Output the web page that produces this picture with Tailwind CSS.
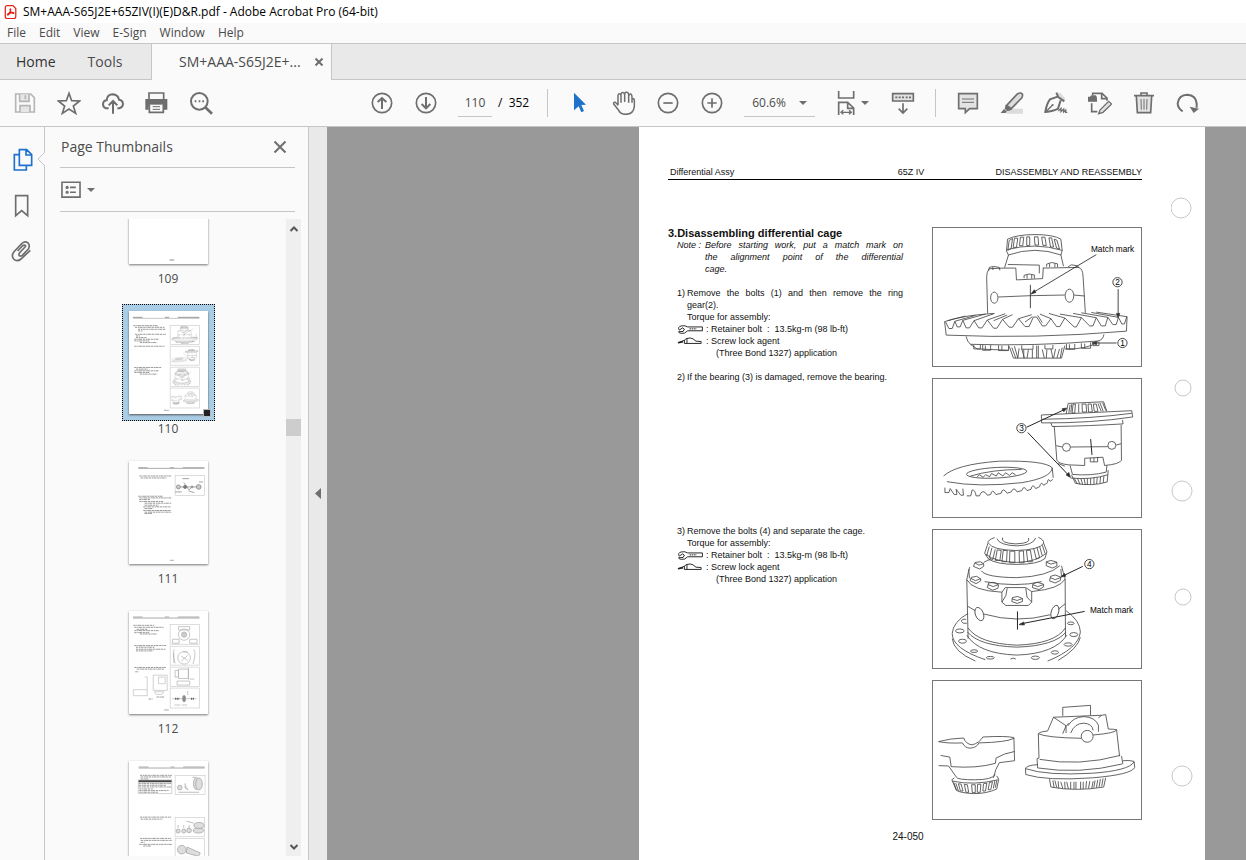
<!DOCTYPE html>
<html lang="en">
<head>
<meta charset="utf-8">
<title>SM+AAA-S65J2E+65ZIV(I)(E)D&amp;R.pdf - Adobe Acrobat Pro (64-bit)</title>
<script src="https://cdn.jsdelivr.net/npm/@tailwindcss/browser@4"></script>
</head>
<body class="flex h-screen flex-col overflow-hidden bg-white font-['Open_Sans','Noto_Sans',sans-serif] text-xs text-[#4b4b4b]">

<!-- Shared drawings -->
<svg class="hidden" aria-hidden="true">
  <symbol id="fig1" viewBox="22 202 628 420" preserveAspectRatio="none">
    <g fill="none" stroke="#444">
      <path d="M247 236Q275 222 330 222Q385 222 408 236L412 270L408 285M247 236L244 272L250 285M245 268Q330 245 412 270M250 284Q330 256 408 284"/>
      <path d="M252 240l10-6l-4 30l-10 6zM268 233h10l-4 28h-10zM286 230h10l-3 26h-10zM305 229h9v26h-9zM328 229h11l2 25h-11zM350 230h10l4 25h-10zM372 232h8l6 28h-9zM388 236l8 3l8 27l-9-3z"/>
      <path d="M250 284L238 323M408 284L416 318M236 324H272L274 360L353 356L355 322M248 313L343 315V340M355 324L462 322Q474 326 475 348L482 460M236 324L192 326Q184 335 184 350L187 462"/>
      <path d="M190 332L192 322L205 319L222 322L224 331M203 320V330M297 355V346L312 342L328 345V356M306 345V356M320 345V356M365 320V312L380 307L398 311V321M374 310V321M390 310V321M430 320L440 314L458 317L463 324"/>
      <ellipse cx="207" cy="414" rx="11" ry="17"/><ellipse cx="434" cy="408" rx="13" ry="20"/>
      <path d="M219 412L316 408L420 406M447 406L480 409"/>
      <path d="M316 375V446M515 283L318 402M581 388V472M576 552H506" stroke="#222"/>
      <path d="M318 403l10-13l5 8zM581 476l-5-14h10zM502 552l14-5v10z" fill="#222"/>
      <path d="M57 487L62 528Q330 540 606 516L608 472M57 487Q110 468 205 462"/>
      <path d="M60 488L70 508H80L88 486L95 503H104L112 483L122 506H132L146 484L160 506H170L186 482L205 507H215L232 480L252 504H262L280 478L300 502H312L325 473H335L352 500H362L378 478L395 502H405L420 476L448 503H455L470 475L495 500H505L515 475L530 500H542L550 474L565 496H575L582 474L592 494H600L607 472"/>
      <path d="M66 484L120 470M88 486L150 468M112 483L180 464M146 484L208 462M186 482L240 463M205 484L246 467M232 480L262 466M280 478L320 466M300 488L322 472M352 490L338 468M378 478L345 464M420 476L372 462M470 475L405 464M515 475L445 462M550 474L470 460M582 474L500 459M608 472L515 458"/>
      <path d="M122 532Q125 548 135 556Q330 562 520 546Q536 542 538 526M135 556L155 570L250 574M420 570Q490 572 520 548"/>
      <path d="M145 558v12h20v-12M172 558v16h24v-16M180 574v-14M220 559v16h30v-16M230 574v-14M290 559v12h34v-12M360 558v12h24v-12M425 555v16h25v-16M434 570v-14M470 553v15h28v-18M480 568v-14M505 550v10h18v-12"/>
      <path d="M252 562L265 598H410L420 560M260 566l12 32M268 562l10 36M282 568l-4 30M296 572v26M290 570l8 28M310 572l-4 26M322 572v26M335 560v38M340 560v38M352 572l6 26M366 572l-2 26M378 570l6 28M392 570l-6 28M404 570l-8 28M412 566l-6 32"/>
    </g>
  </symbol>
  <symbol id="fig2" viewBox="22 16 628 418" preserveAspectRatio="none">
    <g fill="none" stroke="#444">
      <path d="M424 122L430 90L537 85L547 114M436 94l-4 26M441 92l-3 26M452 92h-7l-3 27h8zM462 92v26M472 92h12l2 24h-13zM490 92h10l3 24h-11zM506 92h9l5 22h-11zM520 90l10 24M526 88l10 26M534 88l10 24"/>
      <path d="M349 125L622 112L625 131Q500 150 350 149ZM352 138Q500 136 622 120M378 149L382 160Q500 158 596 152L594 140M388 158L396 262Q400 272 430 276L480 278V256L535 253L540 278Q585 274 591 262L590 155"/>
      <path d="M394 218L412 222M437 222L550 221M575 216L590 212M436 278L443 305Q500 310 545 298L547 278M440 306L452 332Q500 342 548 328L551 292M438 316Q500 322 550 306M497 255v12h22v-14M508 267v-12M400 272l20 8"/>
      <path d="M448 316l10 18M458 316l8 20M468 316l6 20M478 317l4 20M488 317v20M498 316v20M508 315v20M518 314l-2 20M528 312l-2 20M538 310l-2 20"/>
      <circle cx="425" cy="223" r="12"/><circle cx="562" cy="217" r="12"/>
      <path d="M498 198L502 246M305 162L420 108M308 178L432 308" stroke="#222" stroke-width="3"/>
      <path d="M426 104l-14 2l5 9zM437 314l-13-7l8-8z" fill="#222"/>
      <path d="M54 310Q90 275 220 265Q360 262 382 285Q380 315 290 330Q160 345 64 327M382 285L385 315"/>
      <ellipse cx="214" cy="300" rx="91" ry="16" transform="rotate(-3 214 300)"/>
      <path d="M135 310Q200 290 290 290M155 312l8-6l10 8l8-8l12 6l6-10l14 8l6-10l14 10l8-10l12 8l8-8l10 6"/>
      <path d="M58 345V360H70L74 348L86 366H94L92 350L106 368H114L112 348M124 370H136L140 352Q150 352 152 370L162 370Q172 345 186 368L196 366Q200 346 212 366L228 362Q232 342 246 362L258 358Q266 340 276 358L290 354Q296 336 306 354L318 350Q322 330 332 348L344 342Q348 324 356 338L368 330Q368 314 376 326L384 320"/>
    </g>
  </symbol>
  <symbol id="fig3" viewBox="22 22 628 417" preserveAspectRatio="none">
    <g fill="none" stroke="#444">
      <path d="M208 45Q186 52 188 62L178 92L188 108M340 44Q358 52 356 62L366 88L360 108M190 62Q200 82 272 84Q345 82 356 62M215 48Q222 68 275 70Q325 68 332 46M232 45Q225 62 272 64Q320 62 310 46M188 108Q210 126 275 126Q340 126 360 108M182 96Q210 118 275 120Q335 118 364 92"/>
      <path d="M192 72l-8 28M200 76l-8 30l10 6l8-32M216 82l-6 32h14l4-30zM234 84l-4 34h14l2-34zM254 86l-1 35h16V86zM282 86l1 35h14l-2-36zM304 84l4 34h14l-6-35zM326 78l8 32l10-4l-8-32M344 72l8 28M352 68l8 24"/>
      <path d="M133 134Q128 150 124 172L128 350M410 130Q415 150 421 170L422 345M124 172Q140 205 230 210M320 208Q405 200 421 170M175 120Q190 110 196 112M168 145Q180 165 275 166Q370 162 405 130M178 178Q275 196 350 178M130 140L132 168M408 140L410 165"/>
      <path d="M144 132l5-12l16-2l10 6v8l-12 8zM149 122l12 6l14-4M364 130v-12l14-4l18 5v12l-14 6zM364 119l14 6l18-5M134 175l4-10l16-3l12 8v6l-14 8zM136 168l14 7l16-6M186 196l4-14l16-2l14 8l-2 10l-16 6zM188 187l16 6l15-6M322 196l2-12l14-4l18 6v8l-14 8zM323 187l15 6l18-6M374 176l3-14l14-4l16 6v10l-16 8zM376 166l15 6l16-6"/>
      <path d="M230 210V240L242 250H310L320 240V208L302 196H240ZM246 198L242 220L230 240M302 198L306 225L320 240M260 238l2-12l16-3l14 6v9l-16 6zM260 230l16 5l16-6"/>
      <path d="M126 252L150 266M176 276Q275 305 376 278M400 262L421 245M126 330Q160 372 275 376Q390 372 424 330M128 318Q160 365 275 370Q390 366 422 318M124 340Q160 396 275 400Q390 396 426 340"/>
      <ellipse cx="162" cy="276" rx="12" ry="21" transform="rotate(-22 162 276)"/><ellipse cx="390" cy="270" rx="11" ry="21" transform="rotate(18 390 270)"/>
      <path d="M277 268V323M480 268L285 306M474 132L412 162" stroke="#222" stroke-width="3"/>
      <path d="M282 308l14-8l2 9zM408 164l11-11l4 9z" fill="#222"/>
      <path d="M128 274Q82 300 80 335Q80 380 180 414M80 350Q84 390 150 418M424 266Q466 296 467 330Q462 380 368 418M467 346Q460 380 400 416"/>
      <path d="M122 292q-14-2-14 6q2 8 16 6"/><ellipse cx="103" cy="327" rx="13" ry="6"/><ellipse cx="111" cy="358" rx="12" ry="6"/><ellipse cx="146" cy="388" rx="11" ry="4"/><path d="M256 412q8-6 16 0"/><ellipse cx="195" cy="408" rx="12" ry="4"/><ellipse cx="331" cy="408" rx="12" ry="5"/><ellipse cx="390" cy="392" rx="11" ry="5"/><ellipse cx="430" cy="368" rx="12" ry="5"/><ellipse cx="447" cy="338" rx="12" ry="6"/><ellipse cx="438" cy="304" rx="10" ry="4"/>
    </g>
  </symbol>
  <symbol id="fig4" viewBox="157 24 630 419" preserveAspectRatio="none">
    <g fill="none" stroke="#444">
      <path d="M174 208Q210 198 250 197Q256 215 275 218Q298 212 308 194Q380 190 402 196L404 266L358 272Q346 290 340 318M174 208Q200 214 246 212Q254 228 270 228Q290 226 296 212Q380 210 402 198M180 250L208 255L212 284Q290 290 346 274L348 258Q370 244 404 238M174 281L204 282L228 316"/>
      <path d="M228 316Q230 324 285 324Q335 324 346 308M214 324L222 318M350 312L356 322L350 352Q320 366 280 366Q240 364 228 356L214 324M216 328Q280 342 354 324"/>
      <path d="M220 332l8 24M226 334l8 24M234 336l6 22h8l-6-21zM252 338l5 24h8l-4-23zM274 339l2 24h9v-24zM292 338l-1 24h9l2-25zM310 336l-2 22h8l4-24zM328 332l-4 22h8l5-24zM344 328l-4 22M350 326l-4 22"/>
      <path d="M550 130V104L634 98V128M522 134L668 128L680 126L688 170M522 134L504 176M522 134L560 160L550 184M568 152L560 162L560 182M668 128L658 136M566 160Q580 134 614 132Q648 134 658 158V178M574 182Q586 152 614 152Q640 154 642 174"/>
      <path d="M504 176Q480 178 476 184Q500 196 606 198M642 188Q712 182 713 172Q706 170 688 170M476 184L478 258M713 172L722 252M480 262Q600 284 724 250M472 260L474 288M728 252L732 276M472 260L478 258M474 288Q600 308 730 276M474 278Q440 280 437 290L438 308Q500 328 640 318Q760 308 768 286L766 268Q752 264 732 266M437 290Q500 312 640 304Q750 296 766 270"/>
      <circle cx="624" cy="192" r="18" fill="#fff"/>
      <path d="M510 322L514 346Q590 360 674 346L680 318M520 326l4 22M526 326l6 22M536 328l2 22M544 330l6 20M556 330l1 22M562 330l5 22M574 330v22M584 330v22M590 330v22M604 330v22M612 330v22M622 328l-2 22M632 328l-4 22M642 328l-4 22M648 326l-4 22M656 324l-4 24M664 322l-4 24M672 320l-4 24"/>
    </g>
  </symbol>
  <symbol id="wrench" viewBox="66 494 82 28">
    <g fill="none" stroke="#222" stroke-width="3"><path d="M72 510Q66 500 78 497Q90 494 98 500H144V512H98Q90 522 78 520Q70 519 70 515L84 514L88 507L82 503Z"/><path d="M104 506H126" stroke-dasharray="5 2"/></g>
  </symbol>
  <symbol id="bottle" viewBox="66 530 82 28">
    <g fill="none" stroke="#222" stroke-width="3"><path d="M68 548L88 540Q92 533 106 533Q114 533 124 543L140 544V550H88V540M96 534V550"/><path d="M68 548L84 545" stroke-width="5"/></g>
  </symbol>
  <symbol id="caret" viewBox="0 0 8 4"><path d="M0 0H8L4 4Z" fill="#6e6e6e"/></symbol>
</svg>

<header class="shrink-0">
  <div class="flex h-[23px] items-center gap-[5px] px-1 text-black">
    <svg class="size-[14px] shrink-0" viewBox="10 8 42 44" fill="none" stroke="#e2231a"><path d="M18 10H37L46 19V44Q46 51 39 51H20Q13 51 13 44V16Q13 10 18 10Z" stroke-width="4"/><path d="M22 40Q17 38 24 34Q31 30 30 22Q29 18 28 22Q28 28 34 33Q38 35 40 33Q38 29 30 33Q24 36 22 40" stroke-width="4"/></svg>
    <h1 class="whitespace-nowrap text-xs">SM+AAA-S65J2E+65ZIV(I)(E)D&amp;R.pdf - Adobe Acrobat Pro (64-bit)</h1>
  </div>
  <nav class="flex h-5 items-center gap-[13px] bg-[#fafafa] px-[7px]" aria-label="Menu">
    <button>File</button><button>Edit</button><button>View</button><button>E-Sign</button><button>Window</button><button>Help</button>
  </nav>
  <div class="flex h-[37px] border-y border-[#c6c6c6] bg-[#e9e9e9] text-sm">
    <div class="flex w-[151px] items-center gap-8 pl-4">
      <button class="text-[#323232]">Home</button><button>Tools</button>
    </div>
    <div class="-mb-px flex w-[181px] items-center justify-between border-x border-[#c6c6c6] bg-[#fafafa] pr-2 pl-[27px]">
      <button class="whitespace-nowrap">SM+AAA-S65J2E+...</button>
      <button aria-label="Close tab"><svg class="size-2" viewBox="0 0 8 8" stroke="#6e6e6e" stroke-width="2"><path d="M.5.5l7 7M7.500.5l-7 7"/></svg></button>
    </div>
  </div>

  <div class="flex h-[47px] items-center border-b border-[#c6c6c6] bg-[#fafafa] pl-[3px]" role="toolbar" aria-label="Tools">
    <button class="flex w-11 justify-center" aria-label="Save"><svg class="size-6" viewBox="39 273 72 72" fill="none" stroke="#b5b5b5" stroke-width="5"><path d="M47 282H92L103 293V336H47Z"/><path d="M59 283V304H87V283" fill="#e6e6e6"/><path d="M76 286V298M60 336V317H90V336" fill="#e6e6e6"/></svg></button>
    <button class="flex w-11 justify-center" aria-label="Star"><svg class="size-6" viewBox="171 273 72 72" fill="none" stroke="#6e6e6e" stroke-width="5"><path d="M207 280L215 302L239 303L220 318L227 340L207 327L187 340L194 318L175 303L199 302Z"/></svg></button>
    <button class="flex w-11 justify-center" aria-label="Upload"><svg class="size-6" viewBox="303 273 72 72" fill="none" stroke="#6e6e6e" stroke-width="6"><path d="M326 325H318Q309 322 309 313Q310 301 320 301Q322 283 338 283Q354 284 357 299Q368 300 369 312Q368 323 358 325H352M339 341V304M326 316L339 303L352 316"/></svg></button>
    <button class="flex w-11 justify-center" aria-label="Print"><svg class="size-6" viewBox="434 273 72 72" fill="none" stroke="#6e6e6e" stroke-width="5"><path d="M446 298V279H490V298"/><path d="M435 297H501V329H491V318H445V329H435Z" fill="#6e6e6e" stroke="none"/><path d="M447 314V337H489V314" fill="#fafafa"/><path d="M457 320H479M457 328H479" stroke-width="3"/></svg></button>
    <button class="flex w-11 justify-center" aria-label="Find"><svg class="size-6" viewBox="567 273 72 72" fill="none" stroke="#6e6e6e" stroke-width="6"><circle cx="598" cy="304" r="25"/><path d="M615 321L636 341" stroke-width="8"/><path d="M584 304h5M596 304h5M607 304h5"/></svg></button>

    <button class="ml-[137px] flex w-11 justify-center" aria-label="Previous page"><svg class="size-6" viewBox="60 45 72 72" fill="none" stroke="#6e6e6e" stroke-width="5"><circle cx="96" cy="81" r="29"/><path d="M96 99V67M83 78L96 66L109 78" stroke-width="6"/></svg></button>
    <button class="flex w-11 justify-center" aria-label="Next page"><svg class="size-6" viewBox="192 45 72 72" fill="none" stroke="#6e6e6e" stroke-width="5"><circle cx="228" cy="81" r="29"/><path d="M228 63V96M215 84L228 97L241 84" stroke-width="6"/></svg></button>
    <input class="ml-2.5 h-7 w-[34px] border-b border-[#c6c6c6] text-center text-xs" value="110" aria-label="Page number">
    <span class="ml-1.5 whitespace-pre text-black">/  352</span>
    <span class="ml-[18px] h-7 w-px bg-[#c6c6c6]"></span>
    <button class="ml-2.5 flex w-11 justify-center" aria-label="Select"><svg class="size-6" viewBox="657 45 72 72"><path d="M675 50L711 86L697 87L705 105L697 109L689 91L675 103Z" fill="#1f72cc"/></svg></button>
    <button class="flex w-11 justify-center" aria-label="Hand"><svg class="size-6" viewBox="786 45 72 72" fill="none" stroke="#6e6e6e" stroke-width="4.500" stroke-linejoin="round"><path d="M804 88V58Q805 52 810 54Q813 55 813 60V80M813 58V54Q815 48 820 50Q824 51 824 56V78M824 54Q826 47 831 49Q836 50 836 56V80M836 60Q840 51 844 55Q846 58 846 64V80M846 70Q852 66 853 72V92Q850 115 827 115Q812 115 806 103L791 84Q790 77 796 79Q800 81 804 88"/></svg></button>
    <button class="flex w-11 justify-center" aria-label="Zoom out"><svg class="size-6" viewBox="918 45 72 72" fill="none" stroke="#6e6e6e" stroke-width="5"><circle cx="954" cy="81" r="29"/><path d="M940 81H968"/></svg></button>
    <button class="flex w-11 justify-center" aria-label="Zoom in"><svg class="size-6" viewBox="1050 45 72 72" fill="none" stroke="#6e6e6e" stroke-width="5"><circle cx="1086" cy="81" r="29"/><path d="M1072 81H1100M1086 67V95"/></svg></button>
    <div class="relative ml-2.5 w-[71px]">
      <select class="h-7 w-full appearance-none border-b border-[#c6c6c6] pl-2 text-xs" aria-label="Zoom level"><option>60.6%</option></select>
      <svg class="pointer-events-none absolute top-3 right-2 h-1 w-2"><use href="#caret"/></svg>
    </div>
    <button class="ml-[22px] flex w-8 items-center gap-1" aria-label="Page display"><svg class="h-6 w-5 shrink-0" viewBox="52 45 60 72" fill="none" stroke="#6e6e6e" stroke-width="5"><path d="M57 45V66H102V45M57 117V79H84L102 96V117M84 79V97H102"/><path d="M64 109H95M71 103L64 109L71 115M88 103L95 109L88 115" stroke-width="4"/></svg><svg class="h-1 w-2 shrink-0"><use href="#caret"/></svg></button>
    <button class="ml-3 flex w-11 justify-center" aria-label="Scrolling"><svg class="size-6" viewBox="213 45 72 72" fill="none" stroke="#6e6e6e" stroke-width="5"><path d="M218 53H280V75H218Z" fill="#e3e3e3"/><path d="M226 64h6M236 64h6M246 64h6M257 64h6M267 64h6M249 82V110M236 98L249 111L262 98"/></svg></button>
    <span class="ml-2.5 h-7 w-px bg-[#c6c6c6]"></span>
    <button class="ml-2.5 flex w-11 justify-center" aria-label="Comment"><svg class="size-6" viewBox="408 45 72 72" fill="#e3e3e3" stroke="#6e6e6e" stroke-width="5"><path d="M416 53H472V98H449L436 110V98H416Z"/><path d="M426 69H462M426 79H462" stroke-width="3"/></svg></button>
    <button class="flex w-11 justify-center" aria-label="Highlight"><svg class="size-6" viewBox="540 45 72 72"><path d="M572 98H609V113H558Z" fill="#dcdcdc"/><path d="M560 88L592 54Q602 48 607 54Q609 60 605 66L574 98Z" fill="#dcdcdc" stroke="#6e6e6e" stroke-width="5"/><path d="M557 86L576 101L562 106L554 98ZM552 99L562 108L555 111H542Z" fill="#6e6e6e"/></svg></button>
    <button class="flex w-11 justify-center" aria-label="Sign"><svg class="size-6" viewBox="672 45 72 72" fill="none" stroke="#6e6e6e" stroke-width="5"><path d="M712 52L720 50L737 68L731 74Z" fill="#dcdcdc" stroke="none"/><path d="M709 50L715 63L733 76M713 62L690 70Q680 82 676 108Q700 106 714 98L722 73" stroke-width="6"/><circle cx="698" cy="87" r="3" fill="#6e6e6e" stroke="none"/><path d="M676 109L697 88M715 105L723 97V107L731 99V108L737 102V109H742" stroke-width="4"/></svg></button>
    <button class="flex w-11 justify-center" aria-label="Edit"><svg class="size-6" viewBox="804 45 72 72" fill="none" stroke="#6e6e6e" stroke-width="5"><path d="M818 58V52H846L861 66V74M845 52V68H861M815 82V107H832"/><path d="M804 62H810L814 58H827Q831 60 831 68V77H804Z" fill="#6e6e6e" stroke="none"/><path d="M836 113L840 102L866 76L875 84L849 109Z" fill="#e3e3e3" stroke-width="4"/></svg></button>
    <button class="flex w-11 justify-center" aria-label="Delete"><svg class="size-6" viewBox="938 45 72 72" fill="none" stroke="#6e6e6e" stroke-width="5"><path d="M951 60L954 110H994L997 60" fill="#e3e3e3"/><path d="M944 59H1004M965 58V51H983V58"/><path d="M965 69L966 101M974 69V101M983 69L982 101" stroke-width="3"/></svg></button>
    <button class="flex w-11 justify-center" aria-label="Rotate"><svg class="size-6" viewBox="1068 45 72 72" fill="none" stroke="#6e6e6e" stroke-width="6"><path d="M1088 106Q1073 97 1073 82Q1076 57 1102 56Q1128 58 1130 82V95"/><path d="M1109 92L1137 98L1121 111Z" fill="#6e6e6e" stroke="none"/></svg></button>
  </div>
</header>

<div class="flex min-h-0 flex-1">
  <!-- Navigation rail -->
  <nav class="relative flex w-[45px] shrink-0 flex-col items-center gap-[22px] border-r border-[#c6c6c6] bg-[#fafafa] pt-[21px]" aria-label="Panels">
    <button aria-label="Page thumbnails"><svg class="size-6" viewBox="32 66 72 72" fill="none" stroke="#1f72cc" stroke-width="5"><path d="M61 86H45V132H81V119M60 71H82L97 86V118H60ZM80 71V87H97"/></svg></button>
    <button aria-label="Bookmarks"><svg class="size-6" viewBox="31 207 72 72" fill="none" stroke="#6e6e6e" stroke-width="5"><path d="M48 212H84V272L66 257L48 272Z"/></svg></button>
    <button aria-label="Attachments"><svg class="size-6" viewBox="31 344 72 72" fill="none" stroke="#6e6e6e" stroke-width="5"><path d="M79 362L60 382Q55 390 61 392Q66 393 70 388L86 371Q92 360 85 353Q76 346 67 354L43 379Q34 391 42 401Q52 411 64 401L92 375M79 362Q74 357 68 362L54 377"/></svg></button>
    <svg class="absolute top-6 -right-px h-4 w-2" viewBox="0 0 8 16"><path d="M8 1L1 8L8 15" fill="#fafafa" stroke="#c6c6c6"/></svg>
  </nav>

  <!-- Thumbnail panel -->
  <aside class="flex w-[264px] shrink-0 flex-col border-r border-[#c6c6c6] bg-[#fafafa] pb-1" aria-label="Page Thumbnails">
    <div class="mr-[13px] ml-[15px] flex h-[41px] items-center justify-between border-b border-[#c6c6c6] pr-2 pl-px">
      <h2 class="text-sm">Page Thumbnails</h2>
      <button aria-label="Close panel"><svg class="size-3.5" viewBox="0 0 14 14" stroke="#6e6e6e" stroke-width="2"><path d="M1.500 1.500l11 11M12.500 1.500l-11 11"/></svg></button>
    </div>
    <div class="mr-[13px] ml-[15px] flex h-11 items-center border-b border-[#c6c6c6] pl-px">
      <button class="flex items-center gap-1.5" aria-label="Options"><svg class="h-[18px] w-5" viewBox="182 164 62 54" fill="none" stroke="#6e6e6e" stroke-width="5"><path d="M185 167H241V213H185ZM210 183H228M210 198H228"/><circle cx="201" cy="183" r="3" fill="#6e6e6e" stroke-width="4"/><circle cx="201" cy="198" r="3" fill="#6e6e6e" stroke-width="4"/></svg><svg class="h-1 w-2"><use href="#caret"/></svg></button>
    </div>
    <div class="mt-[7px] flex min-h-0 flex-1 pr-[7px]">
      <div class="flex-1 overflow-hidden">
        <ol class="-mt-[65px] flex flex-col gap-[17px] pl-[5px] leading-4">
          <li class="flex flex-col items-center">
            <div class="p-[7px]"><svg class="h-[103px] w-[79px] bg-white shadow-[0_1px_2px_#777]" viewBox="57 45 238 310"><path d="M179 343h14" stroke="#aaa" stroke-width="4"/></svg></div>109
          </li>
          <li class="flex flex-col items-center">
            <div class="relative border border-dotted border-black bg-[#a9cde5] p-1.5">
              <svg class="h-[103px] w-[79px] bg-white shadow-[0_1px_2px_#555]" viewBox="57 45 238 310" fill="none" stroke-width="5">
                <path d="M69 64H98M165 64H178M204 64H269" stroke="#999" stroke-width="3"/><path d="M69 67H269" stroke="#aaa" stroke-width="2"/>
                <path d="M70 89H145M75 94H165M84 100H168M84 105H98M75 115H168M78 120H90M78 125H112M73 130H146M73 135H118M90 140H142M73 151H164M73 215H154M78 220H114M73 225H146M73 230H118M90 235H142M163 344H178" stroke="#999" stroke-width="3" stroke-dasharray="7 2 4 1 9 2"/>
                <g stroke="#ccc" stroke-width="2"><rect x="181" y="88" width="88" height="58"/><rect x="181" y="151" width="88" height="57"/><rect x="181" y="214" width="88" height="58"/><rect x="181" y="277" width="88" height="60"/></g>
                <use href="#fig1" x="181" y="88" width="88" height="58" opacity=".6"/><use href="#fig2" x="181" y="151" width="88" height="57" opacity=".6"/><use href="#fig3" x="181" y="214" width="88" height="58" opacity=".6"/><use href="#fig4" x="181" y="277" width="88" height="60" opacity=".6"/>
              </svg>
              <span class="absolute right-1 bottom-1 size-1.5 bg-[#222] outline outline-[#bbb]"></span>
            </div>110
          </li>
          <li class="flex flex-col items-center">
            <div class="p-[7px]"><svg class="h-[103px] w-[79px] bg-white shadow-[0_1px_2px_#777]" viewBox="57 495 238 310" fill="none">
              <path d="M85 515H113M180 515H193M219 515H284M85 517H284M180 794H192" stroke="#aaa" stroke-width="3"/>
              <path d="M88 540H184M92 546H170M85 601H158M88 606H184M88 611H120M88 617H160M104 622H184M104 628H146M100 633H184M104 638H130M100 644H184M104 649H184M104 653H126" stroke="#999" stroke-width="3" stroke-dasharray="7 2 4 1 9 2"/>
              <rect x="196" y="539" width="88" height="60" stroke="#ccc" stroke-width="2"/><path d="M200 573H275M218 548H238M222 560L238 582L248 572M268 558H280M196 588H216M236 585L254 590" stroke="#777" stroke-width="2"/><g fill="#ccc" stroke="#777" stroke-width="2"><circle cx="206" cy="573" r="6"/><circle cx="226" cy="573" r="5" fill="#777"/><circle cx="267" cy="573" r="7"/><circle cx="247" cy="573" r="3"/></g>
            </svg></div>111
          </li>
          <li class="flex flex-col items-center">
            <div class="p-[7px]"><svg class="h-[103px] w-[79px] bg-white shadow-[0_1px_2px_#777]" viewBox="57 33 238 310" fill="none">
              <path d="M69 51H98M165 51H178M204 51H269M69 54H269M163 331H177" stroke="#aaa" stroke-width="3"/>
              <path d="M70 76H134M73 82H162M80 88H112M73 92H146M73 98H118M90 102H142M73 137H169M78 142H134M78 148H168M78 153H130M73 203H168M80 208H164M76 216H86M116 298H128M140 292H164" stroke="#999" stroke-width="3" stroke-dasharray="7 2 4 1 9 2"/>
              <g stroke="#ccc" stroke-width="2"><rect x="181" y="73" width="88" height="60"/><rect x="181" y="139" width="88" height="57"/><rect x="181" y="202" width="88" height="58"/><rect x="181" y="265" width="88" height="60"/><path d="M104 232H112V270H70V288H112V270M130 226H172V272H130ZM146 232H166V252H146ZM134 276H162L156 284H138Z" stroke="#bbb"/></g>
              <g stroke="#aaa" stroke-width="2"><circle cx="223" cy="104" r="17"/><circle cx="223" cy="104" r="8" fill="#ccc"/><path d="M188 118H208V130H188ZM240 118H262V130H240ZM206 80H240V90H206ZM192 160V190M194 148Q186 160 196 190M252 148Q260 160 250 192"/><circle cx="223" cy="174" r="19"/><path d="M214 168L234 182M234 166L214 184M220 156H234"/><path d="M206 208H236V236H206ZM196 212H206V232H196ZM236 204V240M202 244H240V256H202ZM240 238H254M188 297H260M194 316H212M216 316H232M234 274V286"/><ellipse cx="223" cy="297" rx="5" ry="10" fill="#888"/><path d="M196 297h12M244 297h10" stroke="#555" stroke-width="6" stroke-dasharray="3 2"/></g>
            </svg></div>112
          </li>
          <li class="flex flex-col items-center" aria-label="113">
            <div class="p-[7px]"><svg class="h-[103px] w-[79px] bg-white shadow-[0_1px_2px_#777]" viewBox="57 483 238 310" fill="none">
              <path d="M86 501H116M182 501H194M220 501H285M86 504H285" stroke="#aaa" stroke-width="3"/>
              <path d="M90 526H186M92 531H184M92 537H116M86 551H184M86 556H170M86 561H184M88 567H130M88 572H178M88 577H144M90 652H184M92 658H158M90 716H184M92 722H186M92 728H104M88 734H186M100 739H124" stroke="#999" stroke-width="3" stroke-dasharray="7 2 4 1 9 2"/>
              <path d="M85 540H186V547H85Z" fill="#444"/><path d="M85 540H186V581H85Z" stroke="#bbb" stroke-width="2"/>
              <g stroke="#ccc" stroke-width="2"><rect x="196" y="527" width="90" height="57"/><rect x="196" y="653" width="88" height="58"/><rect x="196" y="716" width="88" height="80"/></g>
              <g stroke="#999" stroke-width="2" fill="#ddd"><ellipse cx="260" cy="551" rx="9" ry="18"/><ellipse cx="268" cy="552" rx="10" ry="18"/><circle cx="210" cy="563" r="7"/><path d="M226 550v14l10 6M206 577H268M248 532H258"/><circle cx="205" cy="694" r="6"/><circle cx="222" cy="694" r="6"/><circle cx="238" cy="692" r="7"/><ellipse cx="266" cy="692" rx="16" ry="8"/><ellipse cx="268" cy="677" rx="16" ry="9"/><path d="M230 664L252 670M205 676v8M222 676v8M238 676v8M232 742L272 760L266 770L230 760Z"/><circle cx="216" cy="750" r="13"/></g>
            </svg></div>
          </li>
        </ol>
      </div>
      <div class="flex w-[15px] flex-col items-center justify-between bg-[#efefef] py-1.5" aria-hidden="true">
        <svg class="h-[7px] w-2.5" viewBox="0 0 10 7" fill="none" stroke="#555" stroke-width="2"><path d="M1.500 6L5 2.500L8.500 6"/></svg>
        <div class="mb-[220px] h-[17px] w-full bg-[#cdcdcd]"></div>
        <svg class="h-[7px] w-2.5" viewBox="0 0 10 7" fill="none" stroke="#555" stroke-width="2"><path d="M1.500 2L5 5.500L8.500 2"/></svg>
      </div>
    </div>
  </aside>
  <div class="flex w-[18px] shrink-0 items-center justify-center bg-[#e9e9e9]">
    <button aria-label="Collapse panel"><svg class="h-[11px] w-1.5" viewBox="0 0 6 11"><path d="M6 0V11L0 5.500Z" fill="#6e6e6e"/></svg></button>
  </div>

  <!-- Document view -->
  <main class="flex min-w-0 flex-1 justify-end overflow-hidden bg-[#999] pr-[41px] font-['Liberation_Sans',Arial,sans-serif] text-[#111]">
    <article class="flex w-[566px] shrink-0 bg-white pl-[29px] text-[9px] leading-3">
      <div class="w-[474px] shrink-0 pt-[39px]">
        <header class="grid grid-cols-[1fr_auto_1fr] border-b border-black pb-px text-[9px] leading-3">
          <span class="pl-0.5">Differential Assy</span><span class="pl-3">65Z IV</span><span class="text-right">DISASSEMBLY AND REASSEMBLY</span>
        </header>
        <div class="mt-[47px] grid grid-cols-[235px_210px] grid-rows-[repeat(4,140px)] justify-between gap-y-[11px]">
          <section class="row-span-2">
            <h3 class="text-[11px] leading-3 font-bold">3.Disassembling differential cage</h3>
            <div class="grid grid-cols-[28px_1fr] pl-[9px] italic"><span class="whitespace-nowrap">Note :</span><p><span class="block text-justify [text-align-last:justify]">Before starting work, put a match mark on</span><span class="block text-justify [text-align-last:justify]">the alignment point of the differential</span>cage.</p></div>
            <div class="mt-3 grid grid-cols-[10px_1fr] pl-[9px]"><span>1)</span>
              <div><p class="text-justify">Remove the bolts (1) and then remove the ring gear(2).</p><p>Torque for assembly:</p></div></div>
            <p class="flex items-center gap-0.5 pl-[9px]"><svg class="h-[9px] w-[27px]"><use href="#wrench"/></svg><span class="whitespace-pre">: Retainer bolt  :  13.5kg-m (98 lb-ft)</span></p>
            <p class="flex items-center gap-0.5 pl-[9px]"><svg class="h-[9px] w-[27px]"><use href="#bottle"/></svg>: Screw lock agent</p>
            <p class="pl-12">(Three Bond 1327) application</p>
            <div class="mt-3 grid grid-cols-[10px_1fr] pl-[9px]"><span>2)</span><p class="whitespace-nowrap">If the bearing (3) is damaged, remove the bearing.</p></div>
          </section>
          <svg class="h-full w-full border border-[#777]" viewBox="22 202 628 420" preserveAspectRatio="none"><use href="#fig1" x="22" y="202" width="628" height="420" stroke-width="2.500"/><text x="499" y="274" font-size="25">Match mark</text><g fill="none" stroke="#222" stroke-width="2.500"><circle cx="579" cy="367" r="14"/><circle cx="594" cy="552" r="14"/></g><g font-size="25" text-anchor="middle"><text x="579" y="376">2</text><text x="594" y="561">1</text></g></svg>
          <svg class="col-start-2 h-full w-full border border-[#777]" viewBox="22 16 628 418" preserveAspectRatio="none"><use href="#fig2" x="22" y="16" width="628" height="418" stroke-width="2.500"/><circle cx="289" cy="165" r="14" fill="none" stroke="#222" stroke-width="2.500"/><text x="289" y="174" font-size="25" text-anchor="middle">3</text></svg>
          <section class="-mt-1">
            <div class="grid grid-cols-[10px_1fr] pl-[9px]"><span>3)</span><div><p>Remove the bolts (4) and separate the cage.</p><p>Torque for assembly:</p></div></div>
            <p class="flex items-center gap-0.5 pl-[9px]"><svg class="h-[9px] w-[27px]"><use href="#wrench"/></svg><span class="whitespace-pre">: Retainer bolt  :  13.5kg-m (98 lb-ft)</span></p>
            <p class="flex items-center gap-0.5 pl-[9px]"><svg class="h-[9px] w-[27px]"><use href="#bottle"/></svg>: Screw lock agent</p>
            <p class="pl-12">(Three Bond 1327) application</p>
          </section>
          <svg class="h-full w-full border border-[#777]" viewBox="22 22 628 417" preserveAspectRatio="none"><use href="#fig3" x="22" y="22" width="628" height="417" stroke-width="2.500"/><text x="496" y="274" font-size="25">Match mark</text><circle cx="494" cy="125" r="14" fill="none" stroke="#222" stroke-width="2.500"/><text x="494" y="134" font-size="25" text-anchor="middle">4</text></svg>
          <svg class="col-start-2 h-full w-full border border-[#777]" viewBox="157 24 630 419" preserveAspectRatio="none"><use href="#fig4" x="157" y="24" width="630" height="419" stroke-width="2.500"/></svg>
        </div>
        <footer class="mt-[11px] pl-1.5 text-center text-[10px] leading-3">24-050</footer>
      </div>
      <svg class="ml-[29px] h-[680px] w-6" viewBox="0 0 24 680" fill="none" stroke="#c8c8c8"><circle cx="10" cy="81" r="10"/><circle cx="12" cy="261" r="8"/><circle cx="11" cy="364" r="10"/><circle cx="12" cy="470" r="8"/><circle cx="11" cy="649" r="10"/></svg>
    </article>
  </main>
</div>
</body>
</html>
